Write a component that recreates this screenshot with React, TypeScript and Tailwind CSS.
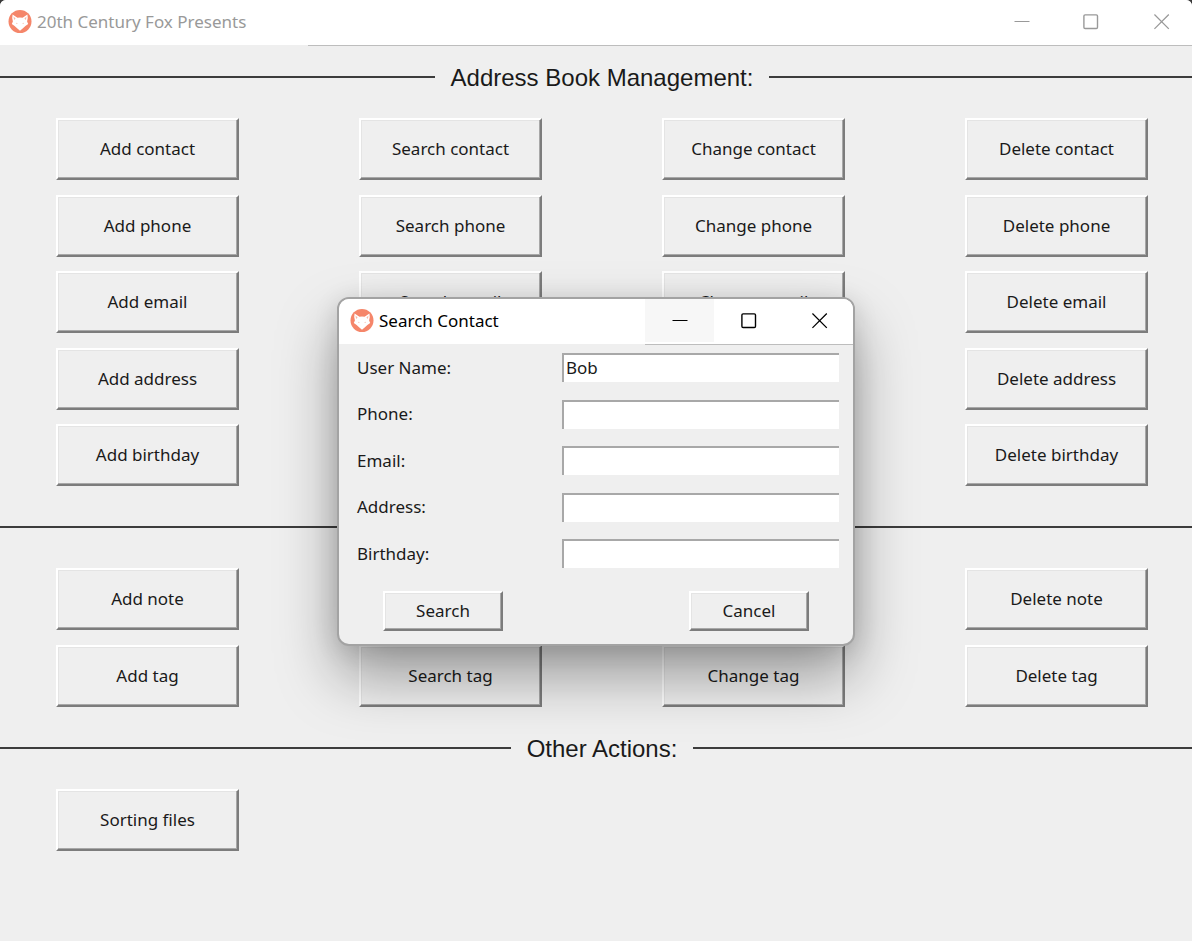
import React from "react";

const RAISED =
  "border-2 border-t-white border-l-white border-r-[#7c7c7c] border-b-[#7c7c7c] shadow-[inset_-1px_-1px_0_#a8a8a8,inset_1px_1px_0_#e4e4e4] text-[17px] leading-6 text-[#1a1a1a]";

function FoxLogo() {
  return (
    <svg viewBox="0 0 24 24" className="size-6 shrink-0" aria-hidden="true">
      <circle cx="12" cy="11.5" r="11.5" fill="#f5866a" />
      <path
        d="M4.6 4.5 L9.4 7.8 Q12 7.1 14.6 7.8 L19.4 4.5 Q20.4 8.7 19.1 11.5 L20.2 13.9 L17.4 16.1 L15.2 17.9 L12 20.7 L8.8 17.9 L6.6 16.1 L3.8 13.9 L4.9 11.5 Q3.6 8.7 4.6 4.5 Z"
        fill="#fff"
      />
      <path d="M5.5 6.5 L7.6 8.5 L6.1 9.9 Z M18.5 6.5 L16.4 8.5 L17.9 9.9 Z" fill="#f9b8a6" />
      <path d="M7.8 12.5 L10 13.9 L8.6 14.1 Z M16.2 12.5 L14 13.9 L15.4 14.1 Z" fill="#f9b8a6" />
    </svg>
  );
}

function WindowControls({ minimizeClass = "", closeClass }: { minimizeClass?: string; closeClass: string }) {
  return (
    <div className="flex">
      <button
        type="button"
        aria-label="Minimize"
        className={`flex h-[43px] w-[69px] items-center justify-center ${minimizeClass}`}
      >
        <svg viewBox="0 0 16 16" className="size-4" fill="none" stroke="currentColor">
          <path d="M0.5 7.5H15.5" />
        </svg>
      </button>
      <button type="button" aria-label="Maximize" className="flex h-[43px] w-[69px] items-center justify-center">
        <svg viewBox="0 0 16 16" className="size-4" fill="none" stroke="currentColor" strokeWidth="1.4">
          <rect x="0.9" y="0.9" width="13.6" height="13.6" rx="1.2" />
        </svg>
      </button>
      <button type="button" aria-label="Close" className={`flex h-[43px] items-center justify-center ${closeClass}`}>
        <svg viewBox="0 0 16 16" className="size-4" fill="none" stroke="currentColor" strokeWidth="1.3">
          <path d="M0.4 0.5L14.8 14.9M14.8 0.5L0.4 14.9" />
        </svg>
      </button>
    </div>
  );
}

type Row = (string | null)[];

function Section({ title, rows, className }: { title?: string; rows: Row[]; className: string }) {
  return (
    <section className={className}>
      <div className="mb-[27px] flex h-7 items-center gap-4">
        <span className="h-[2px] grow basis-3 bg-[#3c3c3c]" />
        {title && (
          <h2 className="pt-[2px] font-['Liberation_Sans',Arial,sans-serif] text-[24px] leading-7 text-[#1a1a1a]">
            {title}
          </h2>
        )}
        <span className={`h-[2px] bg-[#3c3c3c] ${title ? "grow basis-0" : "-ml-4 grow"}`} />
      </div>
      <div
        className={`flex flex-col justify-between pr-11 pl-14 ${rows.length > 4 ? "min-h-[368px] gap-[14px]" : "gap-[15px]"}`}
      >
        {rows.map((row) => (
          <div key={row[0]} className="grid grid-cols-4 gap-x-[120px]">
            {row.map((label, column) =>
              label ? (
                <button key={label} type="button" className={`h-[62px] whitespace-nowrap ${RAISED}`}>
                  {label}
                </button>
              ) : (
                <span key={column} />
              ),
            )}
          </div>
        ))}
      </div>
    </section>
  );
}

const CONTACT_ROWS: Row[] = [
  ["Add contact", "Search contact", "Change contact", "Delete contact"],
  ["Add phone", "Search phone", "Change phone", "Delete phone"],
  ["Add email", "Search email", "Change email", "Delete email"],
  ["Add address", null, null, "Delete address"],
  ["Add birthday", null, null, "Delete birthday"],
];

const NOTE_ROWS: Row[] = [
  ["Add note", null, null, "Delete note"],
  ["Add tag", "Search tag", "Change tag", "Delete tag"],
];

const FIELDS = [
  { id: "name", label: "User Name:", value: "Bob" },
  { id: "phone", label: "Phone:", value: "" },
  { id: "email", label: "Email:", value: "" },
  { id: "address", label: "Address:", value: "" },
  { id: "birthday", label: "Birthday:", value: "" },
];

function SearchDialog() {
  return (
    <div
      role="dialog"
      aria-label="Search Contact"
      className="absolute top-[297px] left-1/2 w-[518px] -translate-x-1/2 overflow-hidden rounded-xl border-2 border-[#a3a3a3] bg-[#efefef] shadow-[0_4px_24px_rgba(0,0,0,0.12),0_30px_60px_rgba(0,0,0,0.36)]"
    >
      <header className="flex h-[45px] justify-between bg-white pl-[11px] text-black">
        <div className="flex h-[44px] items-center gap-[5px]">
          <FoxLogo />
          <h1 className="text-[17px] leading-6">Search Contact</h1>
        </div>
        <div className="h-[46px] border-b border-[#bdbdbd] bg-white">
          <WindowControls minimizeClass="bg-[#f7f7f7]" closeClass="w-[70px] pl-[3px]" />
        </div>
      </header>
      <form onSubmit={(event) => event.preventDefault()} className="pt-[9px] pb-[13px]">
        <div className="flex min-h-[215px] flex-col justify-between pr-[14px] pl-[18px]">
          {FIELDS.map((field) => (
            <div key={field.id} className="flex items-center justify-between">
              <label htmlFor={field.id} className="text-[17px] leading-6 text-[#1a1a1a]">
                {field.label}
              </label>
              <input
                id={field.id}
                type="text"
                defaultValue={field.value}
                className="h-[29px] w-[277px] border-t-2 border-l-2 border-t-[#a8a8a8] border-l-[#a8a8a8] bg-white pb-[2px] pl-[2px] text-[17px] text-[#1a1a1a] outline-none"
              />
            </div>
          ))}
        </div>
        <div className="mt-[23px] flex justify-between px-11">
          <button type="submit" className={`h-10 w-[120px] ${RAISED}`}>
            Search
          </button>
          <button type="button" className={`h-10 w-[120px] ${RAISED}`}>
            Cancel
          </button>
        </div>
      </form>
    </div>
  );
}

export default function App() {
  return (
    <div className="min-h-screen bg-[#3a3a3a] font-['Noto_Sans','Segoe_UI',sans-serif]">
      <div className="relative min-h-screen overflow-hidden rounded-t-md bg-[#efefef]">
        <header className="flex h-[45px] bg-white pl-2 text-[#999]">
          <div className="flex h-[44px] w-[300px] items-center gap-[5px]">
            <FoxLogo />
            <span className="text-[17px] leading-6">20th Century Fox Presents</span>
          </div>
          <div className="flex h-[46px] flex-1 justify-end border-b border-[#bdbdbd]">
            <WindowControls closeClass="w-[67px] pl-[6px]" />
          </div>
        </header>
        <main>
          <Section className="pt-[18px]" title="Address Book Management:" rows={CONTACT_ROWS} />
          <Section className="pt-[27px]" rows={NOTE_ROWS} />
          <Section className="pt-[27px]" title="Other Actions:" rows={[["Sorting files"]]} />
        </main>
        <SearchDialog />
      </div>
    </div>
  );
}
